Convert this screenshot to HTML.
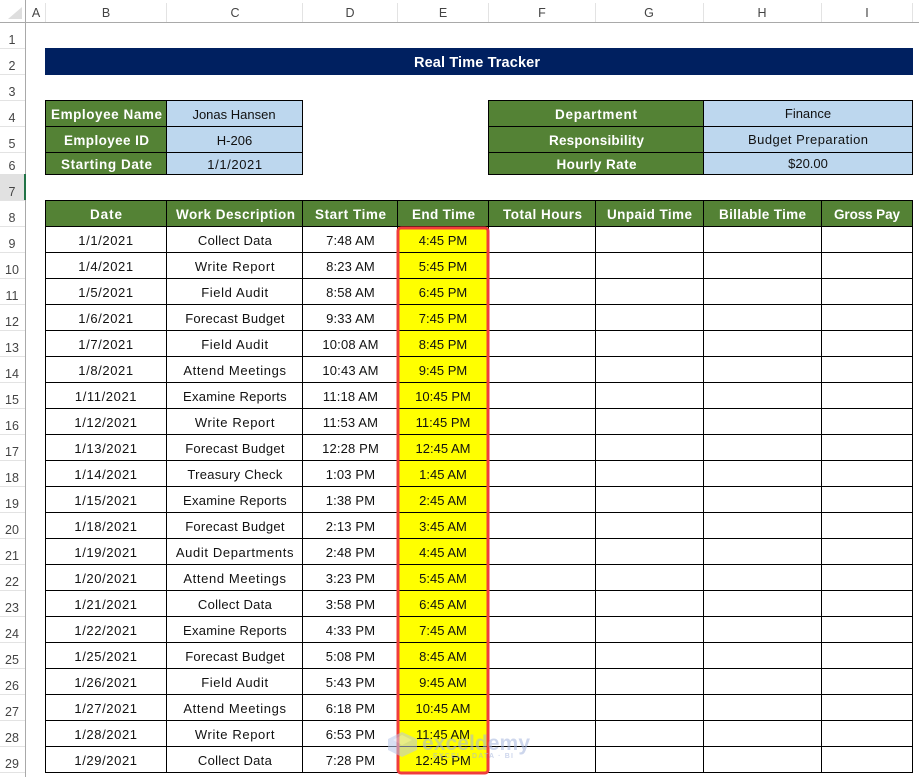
<!DOCTYPE html>
<html><head><meta charset="utf-8"><style>
html,body{margin:0;padding:0;background:#fff;width:919px;height:777px;overflow:hidden}
svg{display:block;font-family:"Liberation Sans",sans-serif}
.d{font-size:13px;fill:#111;text-anchor:middle}
.t{font-size:13px;fill:#111;text-anchor:middle;letter-spacing:.15px}
.n{font-size:13px;fill:#111;text-anchor:middle;letter-spacing:.6px}
.a{font-size:13px;fill:#111;text-anchor:middle;letter-spacing:.62px}
.b{font-size:13px;fill:#111;text-anchor:middle;letter-spacing:.28px}
.h{font-size:13.5px;font-weight:bold;fill:#fff;text-anchor:middle}
.l{font-size:12.5px;fill:#444;text-anchor:middle}
</style></head><body>
<svg width="919" height="777" viewBox="0 0 919 777" xmlns="http://www.w3.org/2000/svg">
<rect width="919" height="777" fill="#fff"/>
<!-- headers -->
<path d="M8 19H22V7Z" fill="#dedede"/>
<rect x="0" y="22" width="919" height="1" fill="#a9a9a9"/>
<rect x="25" y="0" width="1" height="777" fill="#a9a9a9"/>
<path fill="#e3e3e3" d="M45 3h1v19h-1zM166 3h1v19h-1zM302 3h1v19h-1zM397 3h1v19h-1zM488 3h1v19h-1zM595 3h1v19h-1zM703 3h1v19h-1zM821 3h1v19h-1zM912 3h1v19h-1z"/>
<path fill="#e3e3e3" d="M0 48h25v1H0zM0 74h25v1H0zM0 100h25v1H0zM0 126h25v1H0zM0 152h25v1H0zM0 174h25v1H0zM0 200h25v1H0zM0 226h25v1H0zM0 252h25v1H0zM0 278h25v1H0zM0 304h25v1H0zM0 330h25v1H0zM0 356h25v1H0zM0 382h25v1H0zM0 408h25v1H0zM0 434h25v1H0zM0 460h25v1H0zM0 486h25v1H0zM0 512h25v1H0zM0 538h25v1H0zM0 564h25v1H0zM0 590h25v1H0zM0 616h25v1H0zM0 642h25v1H0zM0 668h25v1H0zM0 694h25v1H0zM0 720h25v1H0zM0 746h25v1H0zM0 772h25v1H0z"/>
<rect x="0" y="174" width="24" height="26" fill="#e1e1e1"/>
<rect x="24" y="174" width="2" height="26" fill="#217346"/>
<g>
<text class="l" x="36" y="17">A</text><text class="l" x="106" y="17">B</text><text class="l" x="235" y="17">C</text><text class="l" x="350" y="17">D</text><text class="l" x="443" y="17">E</text><text class="l" x="542" y="17">F</text><text class="l" x="649" y="17">G</text><text class="l" x="762" y="17">H</text><text class="l" x="867" y="17">I</text>
<text class="l" x="12" y="44">1</text><text class="l" x="12" y="70">2</text><text class="l" x="12" y="96">3</text><text class="l" x="12" y="122">4</text><text class="l" x="12" y="148">5</text><text class="l" x="12" y="170">6</text><text class="l" x="12" y="196">7</text><text class="l" x="12" y="222">8</text><text class="l" x="12" y="248">9</text><text class="l" x="12" y="274">10</text><text class="l" x="12" y="300">11</text><text class="l" x="12" y="326">12</text><text class="l" x="12" y="352">13</text><text class="l" x="12" y="378">14</text><text class="l" x="12" y="404">15</text><text class="l" x="12" y="430">16</text><text class="l" x="12" y="456">17</text><text class="l" x="12" y="482">18</text><text class="l" x="12" y="508">19</text><text class="l" x="12" y="534">20</text><text class="l" x="12" y="560">21</text><text class="l" x="12" y="586">22</text><text class="l" x="12" y="612">23</text><text class="l" x="12" y="638">24</text><text class="l" x="12" y="664">25</text><text class="l" x="12" y="690">26</text><text class="l" x="12" y="716">27</text><text class="l" x="12" y="742">28</text><text class="l" x="12" y="768">29</text>
</g>
<!-- title -->
<rect x="45" y="48" width="868" height="27" fill="#002060"/>
<text x="477" y="67" textLength="126" style="font-size:14.5px;font-weight:bold;fill:#fff;text-anchor:middle">Real Time Tracker</text>
<!-- fills -->
<rect x="45" y="100" width="121" height="75" fill="#548235"/>
<rect x="166" y="100" width="136" height="75" fill="#bdd7ee"/>
<rect x="488" y="100" width="215" height="75" fill="#548235"/>
<rect x="703" y="100" width="209" height="75" fill="#bdd7ee"/>
<rect x="45" y="200" width="867" height="26" fill="#548235"/>
<rect x="397" y="226" width="91" height="546" fill="#ffff00"/>
<!-- grid lines -->
<path stroke="#000" stroke-width="1" fill="none" shape-rendering="crispEdges" d="M45.5 100.5H302.5V174.5H45.5ZM45.5 126.5H302.5M45.5 152.5H302.5M166.5 100.5V174.5M488.5 100.5H912.5V174.5H488.5ZM488.5 126.5H912.5M488.5 152.5H912.5M703.5 100.5V174.5"/>
<path stroke="#000" stroke-width="1" fill="none" shape-rendering="crispEdges" d="M45.5 200.5H912.5V772.5H45.5ZM45.5 226.5H912.5M45.5 252.5H912.5M45.5 278.5H912.5M45.5 304.5H912.5M45.5 330.5H912.5M45.5 356.5H912.5M45.5 382.5H912.5M45.5 408.5H912.5M45.5 434.5H912.5M45.5 460.5H912.5M45.5 486.5H912.5M45.5 512.5H912.5M45.5 538.5H912.5M45.5 564.5H912.5M45.5 590.5H912.5M45.5 616.5H912.5M45.5 642.5H912.5M45.5 668.5H912.5M45.5 694.5H912.5M45.5 720.5H912.5M45.5 746.5H912.5M166.5 200.5V772.5M302.5 200.5V772.5M397.5 200.5V772.5M488.5 200.5V772.5M595.5 200.5V772.5M703.5 200.5V772.5M821.5 200.5V772.5"/>
<!-- info text -->
<text class="h" x="106.5" y="119" textLength="111">Employee Name</text>
<text class="h" x="106.5" y="145" textLength="85">Employee ID</text>
<text class="h" x="106.5" y="169" textLength="91">Starting Date</text>
<text class="d" x="234" y="119">Jonas Hansen</text>
<text class="d" x="234.5" y="145">H-206</text>
<text class="n" x="235" y="169">1/1/2021</text>
<text class="h" x="596" y="119" textLength="82">Department</text>
<text class="h" x="596.5" y="145" textLength="95">Responsibility</text>
<text class="h" x="596.5" y="169" textLength="80">Hourly Rate</text>
<text class="d" x="808" y="118">Finance</text>
<text class="d" x="808" y="144" textLength="120">Budget Preparation</text>
<text class="d" x="808" y="168">$20.00</text>
<!-- header text -->
<text class="h" x="106" y="219" textLength="32">Date</text>
<text class="h" x="235.5" y="219" textLength="119">Work Description</text>
<text class="h" x="350.5" y="219" textLength="71">Start Time</text>
<text class="h" x="443.5" y="219" textLength="63">End Time</text>
<text class="h" x="542.5" y="219" textLength="79">Total Hours</text>
<text class="h" x="649.5" y="219" textLength="85">Unpaid Time</text>
<text class="h" x="762.5" y="219" textLength="87">Billable Time</text>
<text class="h" x="867" y="219" textLength="66">Gross Pay</text>
<!-- rows -->
<text class="n" x="106" y="245">1/1/2021</text><text class="b" x="235" y="245">Collect Data</text><text class="t" x="350.5" y="245">7:48 AM</text><text class="d" x="443" y="245">4:45 PM</text>
<text class="n" x="106" y="271">1/4/2021</text><text class="a" x="235" y="271">Write Report</text><text class="t" x="350.5" y="271">8:23 AM</text><text class="d" x="443" y="271">5:45 PM</text>
<text class="n" x="106" y="297">1/5/2021</text><text class="a" x="235" y="297">Field Audit</text><text class="t" x="350.5" y="297">8:58 AM</text><text class="d" x="443" y="297">6:45 PM</text>
<text class="n" x="106" y="323">1/6/2021</text><text class="b" x="235" y="323">Forecast Budget</text><text class="t" x="350.5" y="323">9:33 AM</text><text class="d" x="443" y="323">7:45 PM</text>
<text class="n" x="106" y="349">1/7/2021</text><text class="a" x="235" y="349">Field Audit</text><text class="t" x="350.5" y="349">10:08 AM</text><text class="d" x="443" y="349">8:45 PM</text>
<text class="n" x="106" y="375">1/8/2021</text><text class="a" x="235" y="375">Attend Meetings</text><text class="t" x="350.5" y="375">10:43 AM</text><text class="d" x="443" y="375">9:45 PM</text>
<text class="n" x="106" y="401">1/11/2021</text><text class="b" x="235" y="401">Examine Reports</text><text class="t" x="350.5" y="401">11:18 AM</text><text class="d" x="443" y="401">10:45 PM</text>
<text class="n" x="106" y="427">1/12/2021</text><text class="a" x="235" y="427">Write Report</text><text class="t" x="350.5" y="427">11:53 AM</text><text class="d" x="443" y="427">11:45 PM</text>
<text class="n" x="106" y="453">1/13/2021</text><text class="b" x="235" y="453">Forecast Budget</text><text class="t" x="350.5" y="453">12:28 PM</text><text class="d" x="443" y="453">12:45 AM</text>
<text class="n" x="106" y="479">1/14/2021</text><text class="b" x="235" y="479">Treasury Check</text><text class="t" x="350.5" y="479">1:03 PM</text><text class="d" x="443" y="479">1:45 AM</text>
<text class="n" x="106" y="505">1/15/2021</text><text class="b" x="235" y="505">Examine Reports</text><text class="t" x="350.5" y="505">1:38 PM</text><text class="d" x="443" y="505">2:45 AM</text>
<text class="n" x="106" y="531">1/18/2021</text><text class="b" x="235" y="531">Forecast Budget</text><text class="t" x="350.5" y="531">2:13 PM</text><text class="d" x="443" y="531">3:45 AM</text>
<text class="n" x="106" y="557">1/19/2021</text><text class="a" x="235" y="557">Audit Departments</text><text class="t" x="350.5" y="557">2:48 PM</text><text class="d" x="443" y="557">4:45 AM</text>
<text class="n" x="106" y="583">1/20/2021</text><text class="a" x="235" y="583">Attend Meetings</text><text class="t" x="350.5" y="583">3:23 PM</text><text class="d" x="443" y="583">5:45 AM</text>
<text class="n" x="106" y="609">1/21/2021</text><text class="b" x="235" y="609">Collect Data</text><text class="t" x="350.5" y="609">3:58 PM</text><text class="d" x="443" y="609">6:45 AM</text>
<text class="n" x="106" y="635">1/22/2021</text><text class="b" x="235" y="635">Examine Reports</text><text class="t" x="350.5" y="635">4:33 PM</text><text class="d" x="443" y="635">7:45 AM</text>
<text class="n" x="106" y="661">1/25/2021</text><text class="b" x="235" y="661">Forecast Budget</text><text class="t" x="350.5" y="661">5:08 PM</text><text class="d" x="443" y="661">8:45 AM</text>
<text class="n" x="106" y="687">1/26/2021</text><text class="a" x="235" y="687">Field Audit</text><text class="t" x="350.5" y="687">5:43 PM</text><text class="d" x="443" y="687">9:45 AM</text>
<text class="n" x="106" y="713">1/27/2021</text><text class="a" x="235" y="713">Attend Meetings</text><text class="t" x="350.5" y="713">6:18 PM</text><text class="d" x="443" y="713">10:45 AM</text>
<text class="n" x="106" y="739">1/28/2021</text><text class="a" x="235" y="739">Write Report</text><text class="t" x="350.5" y="739">6:53 PM</text><text class="d" x="443" y="739">11:45 AM</text>
<text class="n" x="106" y="765">1/29/2021</text><text class="b" x="235" y="765">Collect Data</text><text class="t" x="350.5" y="765">7:28 PM</text><text class="d" x="443" y="765">12:45 PM</text>
<!-- red selection -->
<rect x="398" y="228" width="90" height="545" rx="3" fill="none" stroke="#f03c3c" stroke-width="3"/>
<!-- watermark -->
<g opacity=".55">
<path d="M388 739L402 732L417 739V750L402 757L388 750Z" fill="#b9c8ea"/>
<path d="M402 745L393 740L402 735L412 740Z" fill="#d8e0f4"/>
<text x="422" y="750" textLength="108" style="font-size:21px;font-weight:bold;fill:#a6b6de">exceldemy</text>
<text x="433" y="758" textLength="80" style="font-size:7px;font-weight:bold;fill:#a6b6de">EXCEL · DATA · BI</text>
</g>
</svg>
</body></html>
